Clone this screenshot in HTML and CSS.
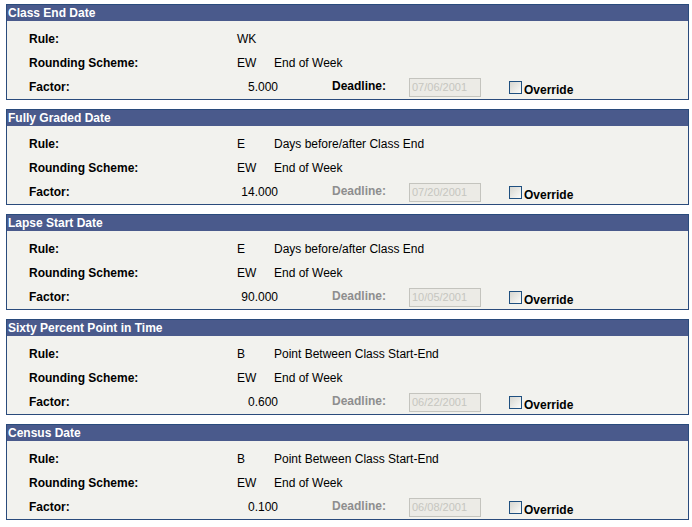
FILE: index.html
```html
<!DOCTYPE html>
<html>
<head>
<meta charset="utf-8">
<link rel="stylesheet" href="styles.css">
</head>
<body>
<div class="page">
  <section class="panel">
    <div class="panel-head">Class End Date</div>
    <div class="panel-body">
      <div class="row"><span class="label">Rule:</span><span class="code">WK</span><span class="desc"></span></div>
      <div class="row"><span class="label">Rounding Scheme:</span><span class="code">EW</span><span class="desc">End of Week</span></div>
      <div class="row"><span class="label">Factor:</span><span class="factor">5.000</span><span class="deadline">Deadline:</span><span class="date">07/06/2001</span><span class="check"></span><span class="override">Override</span></div>
    </div>
  </section>
  <section class="panel">
    <div class="panel-head">Fully Graded Date</div>
    <div class="panel-body">
      <div class="row"><span class="label">Rule:</span><span class="code">E</span><span class="desc">Days before/after Class End</span></div>
      <div class="row"><span class="label">Rounding Scheme:</span><span class="code">EW</span><span class="desc">End of Week</span></div>
      <div class="row"><span class="label">Factor:</span><span class="factor">14.000</span><span class="deadline disabled">Deadline:</span><span class="date">07/20/2001</span><span class="check"></span><span class="override">Override</span></div>
    </div>
  </section>
  <section class="panel">
    <div class="panel-head">Lapse Start Date</div>
    <div class="panel-body">
      <div class="row"><span class="label">Rule:</span><span class="code">E</span><span class="desc">Days before/after Class End</span></div>
      <div class="row"><span class="label">Rounding Scheme:</span><span class="code">EW</span><span class="desc">End of Week</span></div>
      <div class="row"><span class="label">Factor:</span><span class="factor">90.000</span><span class="deadline disabled">Deadline:</span><span class="date">10/05/2001</span><span class="check"></span><span class="override">Override</span></div>
    </div>
  </section>
  <section class="panel">
    <div class="panel-head">Sixty Percent Point in Time</div>
    <div class="panel-body">
      <div class="row"><span class="label">Rule:</span><span class="code">B</span><span class="desc">Point Between Class Start-End</span></div>
      <div class="row"><span class="label">Rounding Scheme:</span><span class="code">EW</span><span class="desc">End of Week</span></div>
      <div class="row"><span class="label">Factor:</span><span class="factor">0.600</span><span class="deadline disabled">Deadline:</span><span class="date">06/22/2001</span><span class="check"></span><span class="override">Override</span></div>
    </div>
  </section>
  <section class="panel">
    <div class="panel-head">Census Date</div>
    <div class="panel-body">
      <div class="row"><span class="label">Rule:</span><span class="code">B</span><span class="desc">Point Between Class Start-End</span></div>
      <div class="row"><span class="label">Rounding Scheme:</span><span class="code">EW</span><span class="desc">End of Week</span></div>
      <div class="row"><span class="label">Factor:</span><span class="factor">0.100</span><span class="deadline disabled">Deadline:</span><span class="date">06/08/2001</span><span class="check"></span><span class="override">Override</span></div>
    </div>
  </section>
</div>
</body>
</html>
```
FILE: styles.css
```css
html, body {
  margin: 0;
  background: #ffffff;
}
body {
  font-family: "Liberation Sans", Arial, sans-serif;
  font-size: 12px;
  color: #000000;
}
.page {
  padding: 4px 3px 0 6px;
  display: flex;
  flex-direction: column;
  gap: 9px;
}
.panel {
  border: 1px solid #2a4b7c;
  background: #f2f2ee;
}
.panel-head {
  background: #4a5a8c;
  color: #ffffff;
  font-weight: bold;
  height: 16px;
  line-height: 16px;
  padding-left: 1px;
}
.panel-body {
  padding: 11px 0 5px 22px;
  display: flex;
  flex-direction: column;
  gap: 10px;
}
.row {
  display: flex;
  align-items: flex-start;
  height: 14px;
  line-height: 14px;
  white-space: nowrap;
}
.label {
  width: 208px;
  font-weight: bold;
}
.code {
  width: 37px;
}
.factor {
  width: 41px;
  text-align: right;
}
.deadline {
  margin-left: 54px;
  width: 77px;
  font-weight: bold;
  margin-top: -1px;
}
.deadline.disabled {
  color: #8e8e8e;
}
.date {
  width: 72px;
  height: 19px;
  box-sizing: border-box;
  border: 1px solid #c4c4be;
  background: #ecebe6;
  color: #c6c6c0;
  font-size: 11px;
  line-height: 17px;
  padding-left: 2px;
  margin-top: -2px;
}
.check {
  margin-left: 28px;
  width: 13px;
  height: 13px;
  box-sizing: border-box;
  border: 1px solid #1f5080;
  background: linear-gradient(135deg, #d6d6d0, #fbfbf9);
  margin-top: 1px;
}
.override {
  margin-left: 2px;
  font-weight: bold;
  margin-top: 3px;
}
```
